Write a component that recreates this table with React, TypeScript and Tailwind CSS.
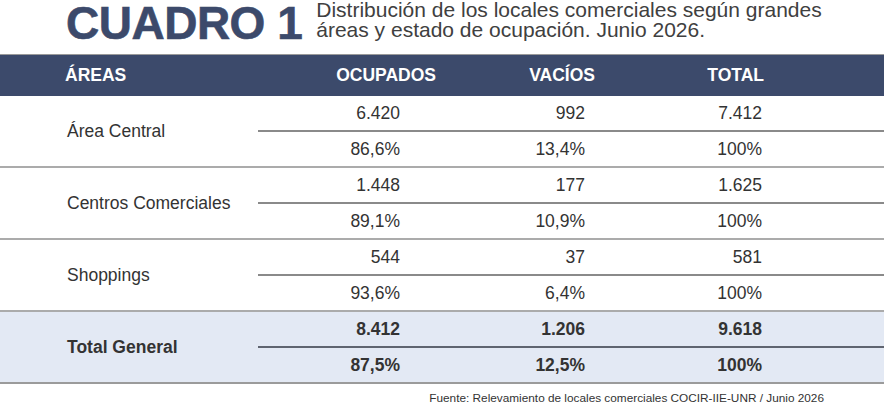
const ROWS = [
  { area: 'Área Central', abs: ['6.420', '992', '7.412'], pct: ['86,6%', '13,4%', '100%'] },
  { area: 'Centros Comerciales', abs: ['1.448', '177', '1.625'], pct: ['89,1%', '10,9%', '100%'] },
  { area: 'Shoppings', abs: ['544', '37', '581'], pct: ['93,6%', '6,4%', '100%'] },
]

const TOTAL = { area: 'Total General', abs: ['8.412', '1.206', '9.618'], pct: ['87,5%', '12,5%', '100%'] }

// right padding per number column so the figures end at 400 / 585 / 762
const PAD = ['pr-[36px]', 'pr-[27px]', 'pr-[122px]']

function Group({ row, bold, last }: { row: typeof TOTAL; bold?: boolean; last?: boolean }) {
  return (
    <div
      className={`grid grid-cols-[258px_178px_176px_272px] border-b-2 ${last ? 'border-[#9b9b9b] bg-[#e3e9f4]' : 'border-[#ababab]'} ${bold ? 'font-bold' : ''}`}
    >
      <div className="row-span-2 flex items-center pl-[67px] text-[17.5px] text-[#333]">{row.area}</div>
      {row.abs.map((v, i) => (
        <div
          key={'a' + i}
          className={`h-[36px] pt-[1px] flex items-center justify-end border-b-2 ${bold ? 'border-[#5f6470]' : 'border-[#8a8a8a]'} text-[17.5px] text-[#333] ${PAD[i]}`}
        >
          {v}
        </div>
      ))}
      {row.pct.map((v, i) => (
        <div key={'p' + i} className={`h-[34px] pt-[1px] flex items-center justify-end text-[17.5px] text-[#333] ${PAD[i]}`}>
          {v}
        </div>
      ))}
    </div>
  )
}

export default function App() {
  return (
    <div className="w-[884px] h-[404px] overflow-hidden bg-white font-['Liberation_Sans',Arial,sans-serif]">
      {/* Título */}
      <div className="flex items-start h-[54px]">
        <h1 className="ml-[66px] pt-[1px] text-[46px] leading-[44px] font-bold tracking-[-0.5px] text-[#3c4a6b] [-webkit-text-stroke:0.6px_#3c4a6b]">
          CUADRO 1
        </h1>
        <p className="ml-[14px] text-[21px] leading-[20px] text-[#404040]">
          Distribución de los locales comerciales según grandes
          <br />
          áreas y estado de ocupación. Junio 2026.
        </p>
      </div>

      {/* Cabecera */}
      <div className="border-t border-[#9a9a9a] bg-[#3c4a6b] h-[42px] grid grid-cols-[258px_178px_176px_272px] items-center text-white font-bold text-[17.5px]">
        <div className="pl-[65px]">ÁREAS</div>
        <div className="text-right">OCUPADOS</div>
        <div className="text-right pr-[17px]">VACÍOS</div>
        <div className="text-right pr-[120px]">TOTAL</div>
      </div>

      {ROWS.map(r => (
        <Group key={r.area} row={r} />
      ))}
      <Group row={TOTAL} bold last />

      {/* Fuente */}
      <p className="mt-[7px] pr-[60px] text-right text-[11.8px] leading-[14px] text-[#333]">
        Fuente: Relevamiento de locales comerciales COCIR-IIE-UNR / Junio 2026
      </p>
    </div>
  )
}
